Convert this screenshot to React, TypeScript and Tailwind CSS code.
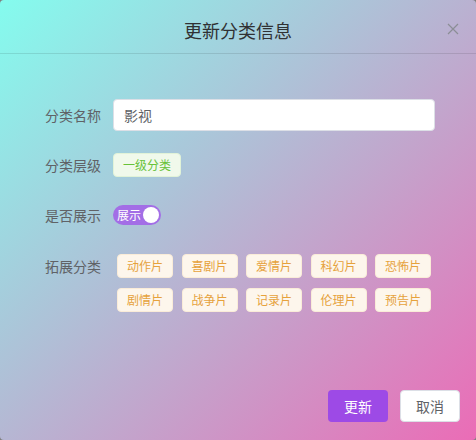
import React from "react";

const tags = ["动作片", "喜剧片", "爱情片", "科幻片", "恐怖片", "剧情片", "战争片", "记录片", "伦理片", "预告片"];

export default function App() {
  return (
    <div className="h-[440px] w-[476px] bg-[#7f7f7f]" style={{ fontFamily: '"Noto Sans CJK SC", "Noto Sans", sans-serif' }}>
      <div className="relative flex h-full flex-col rounded-[4px] bg-[linear-gradient(135deg,#84fcee,#eb6cb6)]">
        <div className="h-[54px] border-b border-black/10 pt-[18px] text-center text-[18px] leading-[24px] text-[#303133]">
          更新分类信息
          <button className="absolute right-[17px] top-[23px] text-[#8b8e96]">
            <svg width="12" height="12" viewBox="0 0 12 12" fill="none" stroke="currentColor" strokeWidth="1.2">
              <path d="M1 1L11 11M11 1L1 11" />
            </svg>
          </button>
        </div>
        <div className="flex flex-col pl-[33px] pt-[45px] text-[14px] text-[#606266]">
          <div className="flex h-[32px] items-center">
            <div className="w-[80px] pr-3 text-right">分类名称</div>
            <div className="flex h-[32px] w-[322px] items-center rounded-[4px] border border-[#dcdfe6] bg-white pl-[10px] text-[#606266]">影视</div>
          </div>
          <div className="mt-[22px] flex h-[24px] items-center">
            <div className="w-[80px] pr-3 text-right">分类层级</div>
            <span className="flex h-[24px] items-center rounded-[4px] border border-[#e1f3d8] bg-[#f0f9eb] px-[9px] text-[12px] text-[#67c23a]">一级分类</span>
          </div>
          <div className="mt-[22px] flex h-[32px] items-center">
            <div className="w-[80px] pr-3 text-right">是否展示</div>
            <div className="flex h-[20px] w-[48px] items-center justify-between rounded-full bg-[#a36ee6] pl-[4px] pr-[2px]">
              <span className="text-[12px] leading-none text-white">展示</span>
              <span className="h-[16px] w-[16px] rounded-full bg-white" />
            </div>
          </div>
          <div className="mt-[22px] flex items-start">
            <div className="w-[80px] pr-3 pt-[1px] text-right leading-[24px]">拓展分类</div>
            <div className="flex w-[322px] flex-wrap gap-x-[8.5px] gap-y-[10px] px-[4px] pt-[1px]">
              {tags.map((t) => (
                <span key={t} className="flex h-[24px] w-[56px] items-center justify-center rounded-[4px] border border-[#faecd8] bg-[#fdf6ec] text-[12px] text-[#e6a23c]">
                  {t}
                </span>
              ))}
            </div>
          </div>
        </div>
        <div className="mt-auto flex justify-end gap-3 pb-[18px] pr-[16px]">
          <button className="h-[32px] w-[60px] rounded-[4px] bg-[#9d4ae6] text-[14px] text-white">更新</button>
          <button className="h-[32px] w-[60px] rounded-[4px] border border-[#dcdfe6] bg-white text-[14px] text-[#606266]">取消</button>
        </div>
      </div>
    </div>
  );
}
